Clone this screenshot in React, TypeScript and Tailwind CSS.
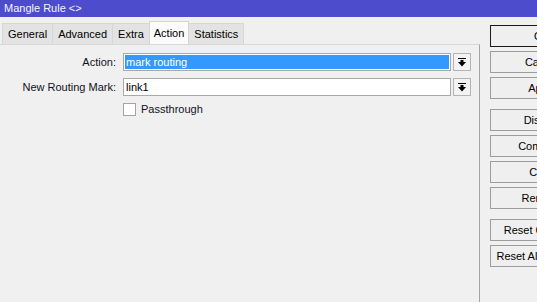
const tabs = ["General", "Advanced", "Extra", "Action", "Statistics"];

const buttonGroups = [
  ["OK", "Cancel", "Apply"],
  ["Disable", "Comment", "Copy", "Remove"],
  ["Reset Counters", "Reset All Counters"],
];

function DropArrow() {
  return (
    <svg width="8" height="9" viewBox="0 0 8 9" className="block">
      <rect x="0" y="0" width="8" height="1" fill="#000" />
      <rect x="2.5" y="2" width="3" height="2" fill="#000" />
      <polygon points="0,4 8,4 4,8.5" fill="#000" />
    </svg>
  );
}

function ComboRow({
  label,
  value,
  selected,
}: {
  label: string;
  value: string;
  selected?: boolean;
}) {
  return (
    <div className="flex items-center h-[18px]">
      <div className="w-[117px] text-right pr-[1px] text-[#111122]">{label}</div>
      <div className="ml-[6px] flex gap-[2px]">
        <div className="w-[328px] h-[18px] border border-[#a9a9a9] bg-white p-px">
          <div
            className={
              selected
                ? "h-full bg-[#3399ff] text-white leading-[14px] pl-[1px]"
                : "h-full bg-white text-black leading-[14px] pl-[1px]"
            }
          >
            {value}
          </div>
        </div>
        <div className="w-[18px] h-[18px] border border-[#b4b4b4] bg-[#f3f3f3] flex items-center justify-center">
          <DropArrow />
        </div>
      </div>
    </div>
  );
}

export default function App() {
  return (
    <div
      className="w-[537px] h-[302px] overflow-hidden bg-[#f0f0f0] flex flex-col text-[11px]"
      style={{ fontFamily: '"Liberation Sans", Arial, sans-serif' }}
    >
      <div className="h-[17px] shrink-0 bg-[#4c4ccc] text-[#f4f4ff] text-[11px] leading-[17px] pl-[4px]">
        Mangle Rule &lt;&gt;
      </div>

      <div className="flex flex-1 min-h-0">
        <div className="w-[480px] shrink-0 flex flex-col pt-[4px]">
          <div className="flex items-end pl-[2px] h-[23px]">
            {tabs.map((tab) => {
              const active = tab === "Action";
              return (
                <div
                  key={tab}
                  className={
                    active
                      ? "h-[23px] px-[4px] border border-b-0 border-[#d4d4d4] bg-[#fbfbfb] leading-[22px] text-black -mr-px relative z-10"
                      : "h-[21px] px-[5px] border border-b-0 border-[#d6d6d6] bg-[#e3e3e3] leading-[21px] text-black -mr-px"
                  }
                >
                  {tab}
                </div>
              );
            })}
          </div>
          <div className="flex-1 border-t border-r border-[#d8d8d8] border-r-[#a5a5a5] pt-[8px] flex flex-col gap-[7px]">
            <ComboRow label="Action:" value="mark routing" selected />
            <ComboRow label="New Routing Mark:" value="link1" />
            <div className="flex items-center h-[12px]">
              <div className="ml-[123px] w-[13px] h-[13px] border border-[#a3a3a3] bg-white" />
              <span className="ml-[5px] text-[#111122]">Passthrough</span>
            </div>
          </div>
        </div>

        <div className="pl-[10px] pt-[8px] flex flex-col gap-[10px]">
          {buttonGroups.map((group, gi) => (
            <div key={gi} className="flex flex-col gap-[4px]">
              {group.map((label) => (
                <div
                  key={label}
                  className={
                    label === "OK"
                      ? "w-[104px] h-[22px] shrink-0 border border-[#1a1a1a] bg-[#efefef] flex items-center justify-center text-black"
                      : "w-[104px] h-[22px] shrink-0 border border-[#9c9c9c] bg-[#efefef] flex items-center justify-center text-black"
                  }
                >
                  {label}
                </div>
              ))}
            </div>
          ))}
        </div>
      </div>
    </div>
  );
}
